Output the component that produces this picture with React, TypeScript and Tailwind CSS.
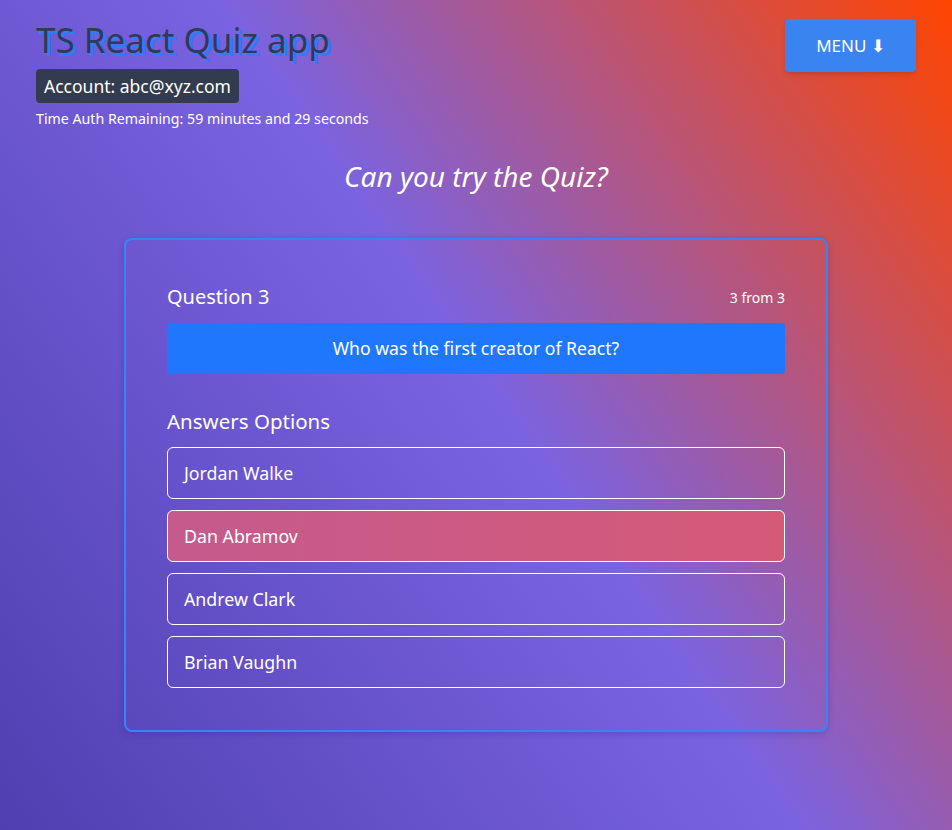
// Quiz screen: header with account info, the current question card and its answer options.

const answers = ["Jordan Walke", "Dan Abramov", "Andrew Clark", "Brian Vaughn"];
const selected = 1;

export default function App() {
  return (
    <div
      className="min-h-[830px] w-full text-white bg-[linear-gradient(55deg,#4f3fb0_0%,#7a63e1_52%,#c45263_79%,#ff4500_100%)]"
      style={{ fontFamily: '"Noto Sans", "Open Sans", sans-serif' }}
    >
      <header className="flex items-start justify-between pl-9 pr-9 pt-[19px]">
        <div className="flex flex-col items-start">
          <h1 className="text-[35px] leading-[46px] text-[#2f3a58] [text-shadow:3px_3px_0.5px_#2f7cf6] -mt-[2px]">
            TS React Quiz app
          </h1>
          <div className="mt-[6px] rounded bg-[#333c4e] px-2 h-[34px] flex items-center text-[17.5px]">
            Account: abc@xyz.com
          </div>
          <p className="mt-[6px] text-[14.2px] leading-5">
            Time Auth Remaining: 59 minutes and 29 seconds
          </p>
        </div>
        <button className="h-[53px] w-[131px] rounded bg-[#3a84f2] text-[17px] shadow-md">
          MENU ⬇
        </button>
      </header>

      <h2 className="mt-[29px] text-center text-[28px] italic leading-9">
        Can you try the Quiz?
      </h2>

      <div className="mx-auto mt-[44px] w-[704px] rounded-lg border-2 border-[#3b82f6] px-[41px] pt-[45px] pb-[42px] shadow-[0_2px_6px_rgba(40,30,120,0.25)]">
        <div className="flex items-center justify-between">
          <span className="text-[20px] leading-6">Question 3</span>
          <span className="text-[14px]">3 from 3</span>
        </div>
        <div className="mt-[14px] flex h-[51px] items-center justify-center rounded-sm bg-[#1f77fe] text-[17.6px]">
          Who was the first creator of React?
        </div>

        <h3 className="mt-[35px] text-[20.5px] leading-6">Answers Options</h3>
        <ul className="mt-[14px] flex flex-col gap-[11px]">
          {answers.map((a, i) => (
            <li
              key={a}
              className={
                i === selected
                  ? "flex h-[52px] items-center rounded-md border border-white bg-[linear-gradient(90deg,#c55a8d,#d55a78)] pl-4 text-[17.8px]"
                  : "flex h-[52px] items-center rounded-md border border-white pl-4 text-[17.8px]"
              }
            >
              {a}
            </li>
          ))}
        </ul>
      </div>
    </div>
  );
}
